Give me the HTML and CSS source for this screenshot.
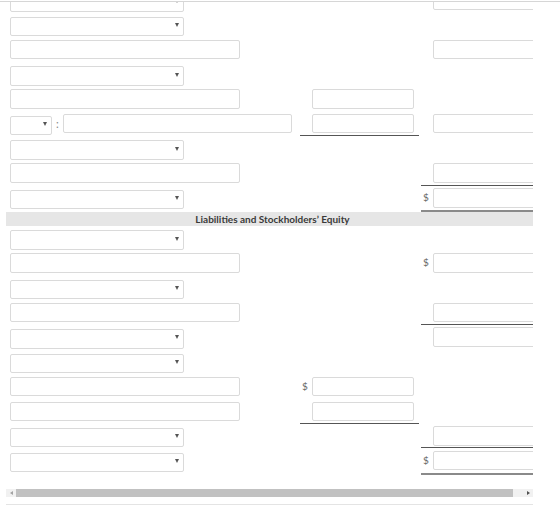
FILE: index.html
```html
<!DOCTYPE html>
<html lang="en">
<head>
  <meta charset="UTF-8" />
  <meta name="viewport" content="width=device-width, initial-scale=1.0"/>
  <title>Balance Sheet</title>
  <link rel="stylesheet" href="styles.css">
</head>
<body>

  <div class="page">
    <div class="frame">
      <div class="sheet">

        <!-- Assets -->
        <div class="row">
          <div class="c-left"><span class="pick"><select></select></span></div>
          <div class="c-mid"></div>
          <div class="c-right"><span class="cur"></span><input type="text" class="amt" /></div>
        </div>
        <div class="row">
          <div class="c-left"><span class="pick"><select></select></span></div>
          <div class="c-mid"></div>
          <div class="c-right"></div>
        </div>
        <div class="row">
          <div class="c-left"><input type="text" class="name" /></div>
          <div class="c-mid"></div>
          <div class="c-right"><span class="cur"></span><input type="text" class="amt" /></div>
        </div>
        <div class="row">
          <div class="c-left"><span class="pick"><select></select></span></div>
          <div class="c-mid"></div>
          <div class="c-right"></div>
        </div>
        <div class="row">
          <div class="c-left"><input type="text" class="name" /></div>
          <div class="c-mid"><span class="cur"></span><input type="text" class="amt" /></div>
          <div class="c-right"></div>
        </div>
        <div class="row">
          <div class="c-left">
            <span class="pick small"><select></select></span>
            <span class="colon">:</span>
            <input type="text" class="name wide" />
          </div>
          <div class="c-mid sub"><span class="cur"></span><input type="text" class="amt" /></div>
          <div class="c-right"><span class="cur"></span><input type="text" class="amt" /></div>
        </div>
        <div class="row">
          <div class="c-left"><span class="pick"><select></select></span></div>
          <div class="c-mid"></div>
          <div class="c-right"></div>
        </div>
        <div class="row">
          <div class="c-left"><input type="text" class="name" /></div>
          <div class="c-mid"></div>
          <div class="c-right sub"><span class="cur"></span><input type="text" class="amt" /></div>
        </div>
        <div class="row total">
          <div class="c-left"><span class="pick"><select></select></span></div>
          <div class="c-mid"></div>
          <div class="c-right sum"><span class="cur">$</span><input type="text" class="amt" /></div>
        </div>

        <div class="band">Liabilities and Stockholders’ Equity</div>

        <!-- Liabilities and equity -->
        <div class="row">
          <div class="c-left"><span class="pick"><select></select></span></div>
          <div class="c-mid"></div>
          <div class="c-right"></div>
        </div>
        <div class="row">
          <div class="c-left"><input type="text" class="name" /></div>
          <div class="c-mid"></div>
          <div class="c-right"><span class="cur">$</span><input type="text" class="amt" /></div>
        </div>
        <div class="row">
          <div class="c-left"><span class="pick"><select></select></span></div>
          <div class="c-mid"></div>
          <div class="c-right"></div>
        </div>
        <div class="row">
          <div class="c-left"><input type="text" class="name" /></div>
          <div class="c-mid"></div>
          <div class="c-right sub"><span class="cur"></span><input type="text" class="amt" /></div>
        </div>
        <div class="row">
          <div class="c-left"><span class="pick"><select></select></span></div>
          <div class="c-mid"></div>
          <div class="c-right"><span class="cur"></span><input type="text" class="amt" /></div>
        </div>
        <div class="row">
          <div class="c-left"><span class="pick"><select></select></span></div>
          <div class="c-mid"></div>
          <div class="c-right"></div>
        </div>
        <div class="row">
          <div class="c-left"><input type="text" class="name" /></div>
          <div class="c-mid"><span class="cur">$</span><input type="text" class="amt" /></div>
          <div class="c-right"></div>
        </div>
        <div class="row">
          <div class="c-left"><input type="text" class="name" /></div>
          <div class="c-mid sub"><span class="cur"></span><input type="text" class="amt" /></div>
          <div class="c-right"></div>
        </div>
        <div class="row">
          <div class="c-left"><span class="pick"><select></select></span></div>
          <div class="c-mid"></div>
          <div class="c-right sub"><span class="cur"></span><input type="text" class="amt" /></div>
        </div>
        <div class="row total">
          <div class="c-left"><span class="pick"><select></select></span></div>
          <div class="c-mid"></div>
          <div class="c-right sum"><span class="cur">$</span><input type="text" class="amt" /></div>
        </div>

      </div>

      <div class="hbar">
        <span class="step left"></span>
        <span class="thumb"></span>
        <span class="rest"></span>
        <span class="step right"></span>
      </div>
    </div>
  </div>

</body>
</html>
```

FILE: styles.css
```css
body {
  margin: 0;
  font-family: 'Lato', 'Liberation Sans', sans-serif;
  background: white;
  color: #333;
}

.page {
  margin-top: 1px;
  border-top: 1px solid #d6d6d6;
  overflow: hidden;
}

.frame {
  margin-left: 6px;
  width: 527px;
  padding-bottom: 6.5px;
  border-bottom: 1px solid #e4e4e4;
}

.sheet {
  overflow: hidden;
  margin-top: -14px;
}

/* one line of the statement */
.row {
  display: grid;
  grid-template-columns: 294px 119px 118px;
  width: 533px;
  height: 24.7px;
}

.row.total {
  height: 26.7px;
}

.c-left, .c-mid, .c-right {
  box-sizing: border-box;
  height: 100%;
  display: flex;
  align-items: flex-start;
  padding-top: 2.5px;
}

.c-left {
  padding-left: 4px;
}

.c-right {
  margin-left: 2px;
}

.sub {
  border-bottom: 1px solid #555;
}

.sum {
  border-bottom: 2px solid #8a8a8a;
}

.cur {
  width: 10px;
  flex: none;
  padding-left: 2px;
  font-size: 10px;
  line-height: 19.5px;
  color: #666;
}

input, select {
  box-sizing: border-box;
  height: 19.5px;
  margin: 0;
  padding: 0 4px;
  border: 1px solid #dadada;
  border-radius: 2px;
  background: white;
  font-family: inherit;
  font-size: 11px;
}

.name {
  width: 230px;
}

.name.wide {
  width: 229px;
}

.amt {
  width: 102px;
}

/* dropdown with its small arrow */
.pick {
  position: relative;
  display: block;
  width: 174px;
  height: 19.5px;
}

.pick.small {
  width: 42px;
}

.pick select {
  appearance: none;
  -webkit-appearance: none;
  width: 100%;
}

.pick::after {
  content: "";
  position: absolute;
  right: 5px;
  top: 8px;
  border-left: 2.5px solid transparent;
  border-right: 2.5px solid transparent;
  border-top: 4px solid #555;
}

.colon {
  width: 11px;
  text-align: center;
  font-size: 11px;
  line-height: 19px;
  color: #888;
}

.band {
  width: 533px;
  height: 14px;
  background: #e6e6e6;
  text-align: center;
  font-size: 10px;
  font-weight: bold;
  line-height: 14px;
  color: #3a3a3a;
}

/* horizontal scroll strip */
.hbar {
  display: flex;
  margin-top: 13.5px;
  height: 8.5px;
  background: #f1f1f1;
}

.step {
  width: 10px;
  flex: none;
  display: flex;
  align-items: center;
  justify-content: center;
}

.step::before {
  content: "";
  border-top: 2.5px solid transparent;
  border-bottom: 2.5px solid transparent;
}

.step.left::before {
  border-right: 3px solid #a3a3a3;
}

.step.right::before {
  border-left: 3px solid #505050;
}

.thumb {
  width: 497px;
  flex: none;
  background: #c1c1c1;
}

.rest {
  flex: 1;
}
```
